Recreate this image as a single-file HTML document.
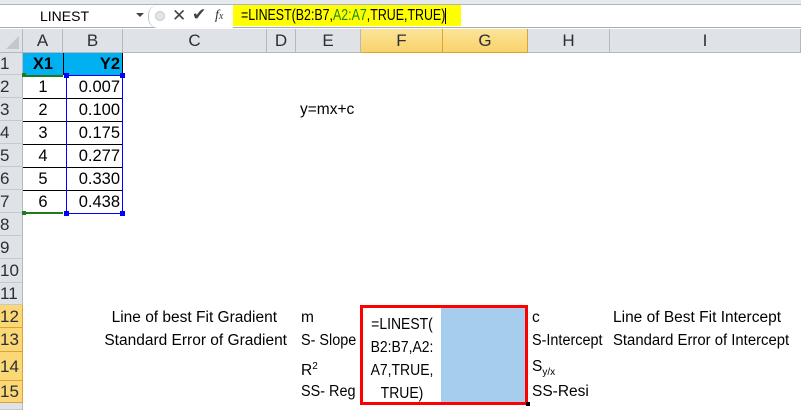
<!DOCTYPE html>
<html><head><meta charset="utf-8"><style>
*{margin:0;padding:0;box-sizing:border-box}
body{width:801px;height:410px;overflow:hidden;background:#fff;position:relative;font-family:"Liberation Sans",sans-serif;font-size:15.5px;color:#000}
.a{position:absolute;white-space:nowrap}
.hd{position:absolute;top:29px;height:24px;background:#dfe3e8;border-right:1px solid #b5b9bf;border-bottom:1px solid #b5b9bf;text-align:center;line-height:23px;color:#2a2f36;font-size:17px}
.hs{background:linear-gradient(#fbe49a,#f9d36a);border-color:#d9a33a}
.rh{position:absolute;left:0;width:23px;background:#dfe3e8;border-right:1px solid #b5b9bf;border-bottom:1px solid #c5c9cf;color:#2a2f36;font-size:17px;padding-left:0px;overflow:hidden}
.rs{background:#fcd775;border-color:#d9a33a}
.c{position:absolute;text-align:center;border-bottom:1px solid #000}
.n{font-size:16.5px}
</style></head><body>
<div class="a" style="left:0;top:0;width:801px;height:5px;background:#e6e9ee;border-bottom:1px solid #b0b4ba"></div>
<div class="a" style="left:0;top:5px;width:801px;height:23px;background:#fff;border-bottom:1px solid #a8acb2"></div>
<div class="a" style="left:40px;top:6px;font-size:14px;line-height:20px">LINEST</div>
<div class="a" style="left:136px;top:13px;width:0;height:0;border-left:4px solid transparent;border-right:4px solid transparent;border-top:4px solid #444"></div>
<div class="a" style="left:148px;top:5px;width:85px;height:23px;background:#fff;border-left:1px solid #c0c4ca;border-radius:10px 0 0 10px"></div>
<div class="a" style="left:155px;top:11px;width:10px;height:10px;border-radius:50%;background:#e2e4e8;border:1px solid #c8cace"></div>
<div class="a" style="left:172px;top:5px;font-size:17px;color:#444;line-height:21px">✕</div>
<div class="a" style="left:192px;top:4px;font-size:17px;color:#444;line-height:21px">✔</div>
<div class="a" style="left:215px;top:5px;font-size:14px;color:#333;font-family:'Liberation Serif',serif;font-style:italic;line-height:21px">f<span style="font-size:10px">x</span></div>
<div class="a" style="left:233px;top:5px;width:228px;height:21px;background:#ffff00"></div>
<div class="a" style="left:241px;top:5px;line-height:21px;font-size:15.5px;transform:scaleX(0.8);transform-origin:0 0">=LINEST(B2:B7,<span style="color:#188a18">A2:A7</span>,TRUE,TRUE)</div>
<div class="a" style="left:445px;top:8px;width:1px;height:16px;background:#000"></div>

<div class="hd" style="left:0;width:23px;background:#dfe3e8"><div style="position:absolute;right:3px;bottom:3px;width:0;height:0;border-left:13px solid transparent;border-bottom:13px solid #c4c8ce"></div></div>
<div class="hd" style="left:23px;width:40px">A</div>
<div class="hd" style="left:63px;width:60px">B</div>
<div class="hd" style="left:123px;width:144px">C</div>
<div class="hd" style="left:267px;width:29px">D</div>
<div class="hd" style="left:296px;width:65px">E</div>
<div class="hd hs" style="left:361px;width:82px">F</div>
<div class="hd hs" style="left:443px;width:85px">G</div>
<div class="hd" style="left:528px;width:82px">H</div>
<div class="hd" style="left:610px;width:191px">I</div>

<div class="rh" style="top:53px;height:22px;line-height:22px">1</div>
<div class="rh" style="top:75px;height:23px;line-height:23px">2</div>
<div class="rh" style="top:98px;height:23px;line-height:23px">3</div>
<div class="rh" style="top:121px;height:23px;line-height:23px">4</div>
<div class="rh" style="top:144px;height:23px;line-height:23px">5</div>
<div class="rh" style="top:167px;height:23px;line-height:23px">6</div>
<div class="rh" style="top:190px;height:23px;line-height:23px">7</div>
<div class="rh" style="top:213px;height:23px;line-height:23px">8</div>
<div class="rh" style="top:236px;height:23px;line-height:23px">9</div>
<div class="rh" style="top:259px;height:24px;line-height:24px">10</div>
<div class="rh" style="top:283px;height:22px;line-height:22px">11</div>
<div class="rh rs" style="top:305px;height:23px;line-height:23px">12</div>
<div class="rh rs" style="top:328px;height:24px;line-height:24px">13</div>
<div class="rh rs" style="top:352px;height:29px;line-height:29px">14</div>
<div class="rh rs" style="top:381px;height:22px;line-height:22px">15</div>
<div class="rh" style="top:403px;height:7px"></div>

<div class="a" style="left:23px;top:53px;width:100px;height:22px;background:#00b0f0;border-right:1px solid #000"></div>
<div class="a" style="left:63px;top:53px;width:1px;height:22px;background:#000"></div>
<div class="a n" style="left:23px;top:53px;width:40px;text-align:center;line-height:22px;font-weight:bold">X1</div>
<div class="a n" style="left:63px;top:53px;width:57px;text-align:right;line-height:22px;font-weight:bold">Y2</div>
<div class="c" style="left:23px;top:98px;width:100px;height:0"></div>
<div class="c" style="left:23px;top:121px;width:100px;height:0"></div>
<div class="c" style="left:23px;top:144px;width:100px;height:0"></div>
<div class="c" style="left:23px;top:167px;width:100px;height:0"></div>
<div class="c" style="left:23px;top:190px;width:100px;height:0"></div>
<div class="a" style="left:23px;top:75px;width:40px;height:2px;background:#1e7a1e"></div>
<div class="a" style="left:23px;top:212px;width:40px;height:2px;background:#1e7a1e"></div>
<div class="a" style="left:66px;top:75px;width:57px;height:139px;border:1px solid #0000ff"></div>
<div class="a" style="left:22px;top:73px;width:4px;height:4px;background:#1e7a1e"></div>
<div class="a" style="left:22px;top:211px;width:4px;height:4px;background:#1e7a1e"></div>
<div class="a" style="left:64px;top:73px;width:5px;height:5px;background:#0000ff"></div>
<div class="a" style="left:120px;top:73px;width:5px;height:5px;background:#0000ff"></div>
<div class="a" style="left:64px;top:211px;width:5px;height:5px;background:#0000ff"></div>
<div class="a" style="left:120px;top:211px;width:5px;height:5px;background:#0000ff"></div>
<div class="a n" style="left:23px;top:76px;width:40px;text-align:center;line-height:22px">1</div>
<div class="a n" style="left:23px;top:99px;width:40px;text-align:center;line-height:22px">2</div>
<div class="a n" style="left:23px;top:122px;width:40px;text-align:center;line-height:22px">3</div>
<div class="a n" style="left:23px;top:145px;width:40px;text-align:center;line-height:22px">4</div>
<div class="a n" style="left:23px;top:168px;width:40px;text-align:center;line-height:22px">5</div>
<div class="a n" style="left:23px;top:191px;width:40px;text-align:center;line-height:22px">6</div>
<div class="a n" style="left:63px;top:76px;width:57px;text-align:right;line-height:22px">0.007</div>
<div class="a n" style="left:63px;top:99px;width:57px;text-align:right;line-height:22px">0.100</div>
<div class="a n" style="left:63px;top:122px;width:57px;text-align:right;line-height:22px">0.175</div>
<div class="a n" style="left:63px;top:145px;width:57px;text-align:right;line-height:22px">0.277</div>
<div class="a n" style="left:63px;top:168px;width:57px;text-align:right;line-height:22px">0.330</div>
<div class="a n" style="left:63px;top:191px;width:57px;text-align:right;line-height:22px">0.438</div>

<div class="a" style="left:300px;top:100px;line-height:20px">y=mx+c</div>

<div class="a" style="left:83px;top:308px;width:194px;text-align:right;line-height:20px">Line of best Fit Gradient</div>
<div class="a" style="left:63px;top:331px;width:224px;text-align:right;line-height:20px">Standard Error of Gradient</div>
<div class="a" style="left:301px;top:308px;line-height:20px">m</div>
<div class="a" style="left:301px;top:331px;line-height:20px;transform:scaleX(0.93);transform-origin:0 0">S- Slope</div>
<div class="a" style="left:301px;top:357px;line-height:20px">R<sup style="font-size:10px">2</sup></div>
<div class="a" style="left:301px;top:382px;line-height:20px;transform:scaleX(0.93);transform-origin:0 0">SS- Reg</div>

<div class="a" style="left:360px;top:305px;width:168px;height:100px;border:3px solid #ff0000"></div>
<div class="a" style="left:441px;top:308px;width:84px;height:94px;background:#a6cdee"></div>
<div class="a" style="left:363px;top:313px;width:78px;text-align:center;line-height:23px;font-size:15.5px"><div style="transform:scaleX(0.9)">=LINEST(<br>B2:B7,A2:<br>A7,TRUE,<br>TRUE)</div></div>
<div class="a" style="left:526px;top:402px;width:4px;height:4px;background:#000"></div>

<div class="a" style="left:532px;top:308px;line-height:20px">c</div>
<div class="a" style="left:532px;top:331px;line-height:20px;transform:scaleX(0.93);transform-origin:0 0">S-Intercept</div>
<div class="a" style="left:532px;top:357px;line-height:20px">S<sub style="font-size:10px">y/x</sub></div>
<div class="a" style="left:532px;top:382px;line-height:20px">SS-Resi</div>
<div class="a" style="left:613px;top:308px;line-height:20px">Line of Best Fit Intercept</div>
<div class="a" style="left:613px;top:331px;line-height:20px;transform:scaleX(0.96);transform-origin:0 0">Standard Error of Intercept</div>
</body></html>
